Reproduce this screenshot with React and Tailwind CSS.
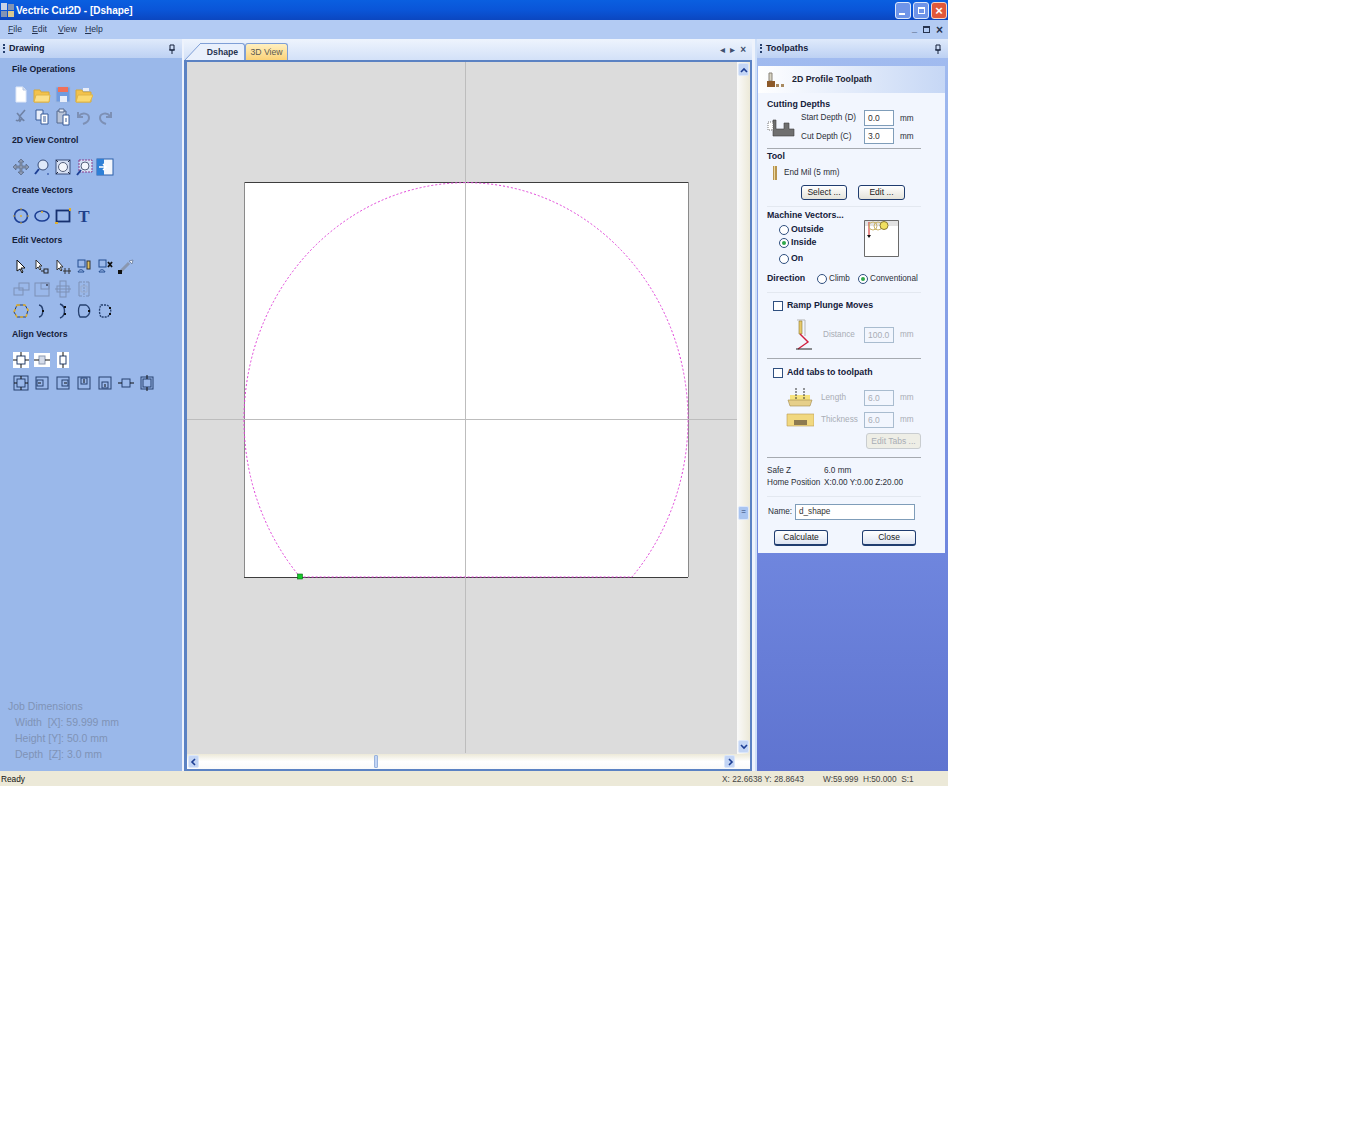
// App.jsx
const ICONS = {
  newFile: <><path d="M4 1h7l3 3v12H4z" fill="#fff" stroke="#dfe8f8" /><path d="M11 1v3h3" fill="#cfdcf4" stroke="#b8c8e4" /></>,
  open: <><path d="M1 4h6l1 2h8v10H1z" fill="#f3c24b" stroke="#d6a93a" /><path d="M1 16l2-7h14l-1 7z" fill="#fbe08a" stroke="#e0b648" /></>,
  save: <><rect x="2" y="1" width="14" height="15" fill="#6f9be0" stroke="#9ab4de" /><rect x="4" y="1" width="10" height="5" fill="#f0705a" /><rect x="6" y="10" width="7" height="6" fill="#e8eefa" /></>,
  openAlt: <><path d="M1 4h6l1 2h8v10H1z" fill="#f3c24b" stroke="#d6a93a" /><path d="M8 2h6v3H8z" fill="#e8eefa" /><path d="M1 16l2-7h15l-3 7z" fill="#fbd970" stroke="#e0b648" /></>,
  cut: <path d="M13 2L7 9M5 5l7 8M7 9a2 2 0 1 1-3 3M12 13a2 2 0 1 0-4 1" fill="none" stroke="#6f82a5" strokeWidth="1.6" />,
  copy: <><path d="M3 2h7v10H3z" fill="#e8eefa" stroke="#365a98" /><path d="M8 6h7v10H8z" fill="#fff" stroke="#365a98" /><path d="M10 9h3M10 11h3M10 13h3" stroke="#365a98" /></>,
  paste: <><path d="M3 3h9v12H3z" fill="#b9c4d8" stroke="#54688c" /><path d="M5 1h5v3H5z" fill="#e8eefa" stroke="#54688c" /><path d="M9 7h6v10H9z" fill="#fff" stroke="#365a98" /><path d="M11 11h2M11 13h2" stroke="#365a98" /></>,
  undo: <path d="M3 4v5h5M4 8c3-4 10-3 10 2 0 3-3 5-6 6" fill="none" stroke="#7d90b5" strokeWidth="2" />,
  redo: <path d="M15 4v5h-5M14 8c-3-4-10-3-10 2 0 3 3 5 6 6" fill="none" stroke="#7d90b5" strokeWidth="2" />,
  pan: <><path d="M9 1l3 3h-2v4h4V6l3 3-3 3v-2h-4v4h2l-3 3-3-3h2v-4H4v2L1 9l3-3v2h4V4H6z" fill="#8a97b0" stroke="#4c5a75" strokeWidth=".6" /></>,
  zoom: <><circle cx="10" cy="7" r="5" fill="#dfe9fa" stroke="#3b4f7a" /><path d="M6 11l-4 5" stroke="#1d3f94" strokeWidth="2" /><path d="M14 16h2" stroke="#1d3f94" /></>,
  zoomAll: <><rect x="2" y="2" width="14" height="14" fill="#d5e0f4" stroke="#3b4f7a" /><circle cx="9" cy="9" r="4.5" fill="#f3f6fc" stroke="#55617c" /><path d="M2 2l2 2M16 2l-2 2M2 16l2-2M16 16l-2-2" stroke="#1f2a44" /></>,
  zoomBox: <><rect x="4" y="2" width="13" height="12" fill="#d5e0f4" stroke="#8b3d8b" strokeDasharray="2 1" /><circle cx="10" cy="8" r="4" fill="#f3f6fc" stroke="#55617c" /><path d="M6 12l-4 5" stroke="#1d3f94" strokeWidth="2" /></>,
  exportView: <><rect x="1" y="1" width="16" height="16" fill="#f3f6fc" stroke="#2b5fa8" /><rect x="1" y="1" width="7" height="16" fill="#2e7fd6" /><path d="M3 9h6M7 6l3 3-3 3" fill="none" stroke="#fff" strokeWidth="1.5" /></>,
  circle: <><circle cx="9" cy="9" r="6.5" fill="none" stroke="#1d3f94" strokeWidth="1.6" /><circle cx="9" cy="9" r="1" fill="#e0b030" /><path d="M9 1v2M9 15v2M1 9h2M15 9h2" stroke="#c9a030" /></>,
  ellipse: <><ellipse cx="9" cy="9" rx="7" ry="5" fill="none" stroke="#1d3f94" strokeWidth="1.6" /><circle cx="9" cy="5" r="1" fill="#e0b030" /></>,
  rect: <><rect x="2.5" y="3.5" width="13" height="11" fill="none" stroke="#16306e" strokeWidth="1.8" /><path d="M1 15h3v2H1zM15 1h2v3h-2z" fill="#e0b030" /></>,
  select: <><path d="M5 2v11l3-2 2 4 1-1-2-4h4z" fill="#fff" stroke="#111" /></>,
  nodeEdit: <><path d="M3 2v9l2-2 2 3 1-1-2-3h3z" fill="#fff" stroke="#333" /><rect x="11" y="11" width="4" height="4" fill="none" stroke="#222" /><path d="M8 13h3" stroke="#222" /></>,
  scale: <><path d="M3 2v10l2-2 2 3 1-1-2-3h3z" fill="#fff" stroke="#333" /><path d="M11 10v6M15 10v6M9 13h8" stroke="#333" /></>,
  group: <><rect x="3" y="2" width="7" height="7" fill="none" stroke="#234c8f" /><path d="M3 14c1-3 5-3 6 0z" fill="none" stroke="#234c8f" /><rect x="12" y="3" width="3" height="8" fill="#e0c060" stroke="#333" /></>,
  ungroup: <><rect x="3" y="2" width="7" height="7" fill="none" stroke="#234c8f" /><path d="M3 14c1-3 5-3 6 0z" fill="none" stroke="#234c8f" /><path d="M12 4l4 5M16 4l-4 5" stroke="#111" strokeWidth="1.8" /></>,
  measure: <><path d="M3 14l9-9" stroke="#8a97b0" strokeWidth="3" /><rect x="1" y="12" width="4" height="4" fill="#111" /><path d="M12 3l4-1-1 4z" fill="#eef3fb" stroke="#788aa8" /></>,
  mirror: <><rect x="7" y="3" width="10" height="7" fill="none" stroke="#7d90b5" /><rect x="2" y="8" width="9" height="7" fill="none" stroke="#7d90b5" /></>,
  alignBox: <><rect x="2" y="3" width="14" height="13" fill="none" stroke="#7d90b5" /><rect x="8" y="3" width="8" height="6" fill="none" stroke="#7d90b5" /><rect x="13" y="4" width="2" height="2" fill="#55617c" /></>,
  cross: <><rect x="6" y="1" width="6" height="16" fill="none" stroke="#7d90b5" /><path d="M1 9h16" stroke="#7d90b5" /><rect x="3" y="6" width="12" height="6" fill="none" stroke="#7d90b5" /></>,
  split: <><path d="M7 2H4v14h3M11 2h3v14h-3" fill="none" stroke="#7d90b5" /><path d="M9 1v16" stroke="#7d90b5" strokeDasharray="2 1" /><path d="M6 6h6v6H6z" fill="none" stroke="#9aaccc" /></>,
  offset: <><path d="M5 3h8l3 5-2 7H5l-3-5z" fill="none" stroke="#26406f" /><path d="M5 3h8l3 5-2 7H5l-3-5z" fill="none" stroke="#e0b030" strokeWidth="1.6" strokeDasharray="3 3" /></>,
  arc: <><path d="M6 3c5 1 5 11 0 12" fill="none" stroke="#26406f" strokeWidth="1.4" /><rect x="9" y="8" width="2" height="2" fill="#111" /></>,
  arcAlt: <><path d="M6 2c6 2 6 12 0 14" fill="none" stroke="#26406f" strokeWidth="1.4" /><rect x="10" y="4" width="2" height="2" fill="#111" /><rect x="10" y="11" width="2" height="2" fill="#111" /></>,
  smooth: <><path d="M5 3h6c5 3 5 9 0 12H5c-2-3-2-9 0-12z" fill="none" stroke="#26406f" strokeWidth="1.3" /><rect x="13" y="8" width="2" height="2" fill="#111" /></>,
  smoothAlt: <><path d="M5 3h6c5 3 5 9 0 12H5c-2-3-2-9 0-12z" fill="none" stroke="#26406f" strokeDasharray="2 1" strokeWidth="1.3" /><rect x="13" y="5" width="2" height="2" fill="#111" /><rect x="13" y="11" width="2" height="2" fill="#111" /></>,
  centerBoth: <><rect x="1" y="1" width="16" height="16" fill="#fff" /><rect x="5" y="5" width="8" height="8" fill="none" stroke="#26406f" /><path d="M9 1v4M9 13v4M1 9h4M13 9h4" stroke="#111" /></>,
  centerX: <><rect x="1" y="2" width="16" height="14" fill="#fff" /><rect x="6" y="5" width="6" height="8" fill="#d5dcea" stroke="#8a97b0" /><path d="M1 9h5M12 9h5" stroke="#111" /></>,
  centerY: <><rect x="3" y="1" width="12" height="16" fill="#fff" /><rect x="6" y="5" width="6" height="8" fill="none" stroke="#26406f" /><path d="M9 1v4M9 13v4" stroke="#111" /></>,
  alignCenter: <><rect x="2" y="2" width="14" height="14" fill="none" stroke="#26406f" /><rect x="5" y="5" width="8" height="8" fill="none" stroke="#26406f" /><path d="M9 2v3M9 13v3M2 9h3M13 9h3" stroke="#111" /></>,
  alignLeft: <><rect x="3" y="3" width="12" height="12" fill="none" stroke="#26406f" /><rect x="4" y="6" width="6" height="6" fill="none" stroke="#26406f" /><path d="M5 9h3" stroke="#111" /></>,
  alignRight: <><rect x="3" y="3" width="12" height="12" fill="none" stroke="#26406f" /><rect x="8" y="6" width="6" height="6" fill="none" stroke="#26406f" /><path d="M10 9h3" stroke="#111" /></>,
  alignTop: <><rect x="3" y="3" width="12" height="12" fill="none" stroke="#26406f" /><rect x="6" y="4" width="6" height="6" fill="none" stroke="#26406f" /><path d="M9 5v4" stroke="#111" /></>,
  alignBottom: <><rect x="3" y="3" width="12" height="12" fill="none" stroke="#26406f" /><rect x="6" y="8" width="6" height="6" fill="none" stroke="#26406f" /><path d="M9 10v3" stroke="#111" /></>,
  alignMidX: <><rect x="5" y="5" width="8" height="8" fill="none" stroke="#26406f" /><path d="M1 9h4M13 9h4" stroke="#111" /></>,
  alignMidY: <><rect x="3" y="3" width="12" height="12" fill="none" stroke="#26406f" /><rect x="5" y="5" width="8" height="8" fill="none" stroke="#26406f" /><path d="M9 1v4M9 13v4" stroke="#111" /></>,
};

const Icon = ({ name }) => (
  <svg viewBox="0 0 18 18" className="w-[18px] h-[18px] shrink-0">
    {ICONS[name]}
  </svg>
);

const IconRow = ({ names }) => (
  <div className="flex gap-[3px] h-[22px] items-center">
    {names.map((n) => (
      <Icon key={n} name={n} />
    ))}
  </div>
);

const SectionTitle = ({ children, className = "" }) => (
  <div className={`pl-[12px] h-[14px] leading-[14px] font-bold text-[8.7px] text-[#14203a] ${className}`}>
    {children}
  </div>
);

const PanelHeader = ({ title }) => (
  <div className="h-[19px] shrink-0 flex items-center justify-between pl-[3px] pr-[6px] bg-gradient-to-b from-[#dfeafb] to-[#bdd1f3]">
    <div className="flex items-center gap-[4px]">
      <span className="w-[2px] h-[9px] border-l-2 border-dotted border-[#26406f]" />
      <span className="font-bold text-[9px] text-[#14203a]">{title}</span>
    </div>
    <svg viewBox="0 0 8 10" className="w-[8px] h-[10px]">
      <path d="M2 1h4v5H2zM1 6h6M4 6v4" fill="none" stroke="#14203a" />
    </svg>
  </div>
);

const LeftPanel = () => (
  <div className="w-[182px] shrink-0 bg-[#9ab8ea] flex flex-col">
    <PanelHeader title="Drawing" />
    <SectionTitle className="mt-[4px]">File Operations</SectionTitle>
    <div className="pl-[12px] mt-[8px]">
      <IconRow names={["newFile", "open", "save", "openAlt"]} />
      <IconRow names={["cut", "copy", "paste", "undo", "redo"]} />
    </div>
    <SectionTitle className="mt-[5px]">2D View Control</SectionTitle>
    <div className="pl-[12px] mt-[9px]">
      <IconRow names={["pan", "zoom", "zoomAll", "zoomBox", "exportView"]} />
    </div>
    <SectionTitle className="mt-[5px]">Create Vectors</SectionTitle>
    <div className="pl-[12px] mt-[8px] flex items-center h-[22px] gap-[3px]">
      <Icon name="circle" />
      <Icon name="ellipse" />
      <Icon name="rect" />
      <span className="w-[18px] text-center font-bold text-[17px] leading-none text-[#1f3f8a] font-['Liberation_Serif',serif]">T</span>
    </div>
    <SectionTitle className="mt-[6px]">Edit Vectors</SectionTitle>
    <div className="pl-[12px] mt-[9px]">
      <IconRow names={["select", "nodeEdit", "scale", "group", "ungroup", "measure"]} />
      <IconRow names={["mirror", "alignBox", "cross", "split"]} />
      <IconRow names={["offset", "arc", "arcAlt", "smooth", "smoothAlt"]} />
    </div>
    <SectionTitle className="mt-[5px]">Align Vectors</SectionTitle>
    <div className="pl-[12px] mt-[8px]">
      <IconRow names={["centerBoth", "centerX", "centerY"]} />
      <div className="mt-[1px]">
        <IconRow names={["alignCenter", "alignLeft", "alignRight", "alignTop", "alignBottom", "alignMidX", "alignMidY"]} />
      </div>
    </div>
    <div className="mt-auto mb-[9px] pl-[8px] text-[10.5px] leading-[16px] text-[#7f93b6]">
      <div>Job Dimensions</div>
      <div className="pl-[7px]">Width&nbsp; [X]: 59.999 mm</div>
      <div className="pl-[7px]">Height [Y]: 50.0 mm</div>
      <div className="pl-[7px]">Depth&nbsp; [Z]: 3.0 mm</div>
    </div>
  </div>
);

const ScrollButton = ({ d }) => (
  <div className="w-[11px] h-[13px] rounded-[2px] bg-[#c3d5f5] border border-[#dce7fa] flex items-center justify-center shrink-0">
    <svg viewBox="0 0 8 8" className="w-[8px] h-[8px]">
      <path d={d} fill="none" stroke="#1d3f94" strokeWidth="1.6" />
    </svg>
  </div>
);

const Drawing = () => (
  <svg width="550" height="691" viewBox="187 62 550 691" className="block">
    <rect x="244" y="182" width="444" height="395" fill="#fff" />
    <path d="M244 182.5h444M244 577.5h444" stroke="#3d3d3d" fill="none" />
    <path d="M244.5 182v395M688.5 182v395" stroke="#8a8a8a" fill="none" />
    <path d="M465.5 62v691M187 419.5h550" stroke="#bdbdbd" fill="none" />
    <path d="M300 577 A222 237 0 1 1 632 577 Z" fill="none" stroke="#e040d8" strokeDasharray="2 2" />
    <rect x="297.5" y="574" width="5" height="5" fill="#16c82a" stroke="#0a6a18" strokeWidth=".6" />
  </svg>
);

const CenterPanel = () => (
  <div className="w-[573px] shrink-0 flex flex-col pl-[2px] pr-[3px] bg-[#eef3fc]">
    <div className="h-[21px] shrink-0 flex items-end pl-[1px] pr-[3px] bg-gradient-to-b from-[#eef4fd] to-[#d3e1f8]">
      <svg viewBox="0 0 16 17" className="w-[16px] h-[17px] shrink-0">
        <path d="M0 17L14 2l2-2v17z" fill="#e9f0fc" />
        <path d="M0 17L14 2l2-2" fill="none" stroke="#7f9fd6" />
      </svg>
      <div className="h-[17px] w-[44px] rounded-tr-[3px] border-t border-r border-[#7f9fd6] bg-[#e9f0fc] text-[8.7px] leading-[16px] text-center font-bold text-[#26334f]">
        Dshape
      </div>
      <div className="h-[17px] w-[43px] rounded-t-[3px] border border-b-0 border-[#7f9fd6] bg-gradient-to-b from-[#fff0c0] to-[#fbd277] text-[8.7px] leading-[16px] text-center text-[#5a5a50]">
        3D View
      </div>
      <div className="ml-auto flex gap-[5px] items-center h-full text-[10px] text-[#40506e] pr-[3px]">
        <span>◂</span>
        <span>▸</span>
        <span className="font-bold">×</span>
      </div>
    </div>
    <div className="flex-1 flex flex-col border-2 border-l-[3px] border-[#5b82c3] bg-[#dcdcdc]">
      <div className="flex flex-1 min-h-0">
        <div className="w-[550px] bg-[#dcdcdc] overflow-hidden">
          <Drawing />
        </div>
        <div className="flex-1 flex flex-col items-center pt-[1px] pb-[1px] bg-gradient-to-r from-[#fafafa] to-[#ece9d8]">
          <ScrollButton d="M1 6l3-3 3 3" />
          <div className="h-[430px]" />
          <div className="w-[11px] h-[14px] rounded-[2px] bg-[#a9c4f0] border border-[#dce7fa] text-center leading-[10px] text-[8px] text-[#26406f]">=</div>
          <div className="flex-1" />
          <ScrollButton d="M1 2l3 3 3-3" />
        </div>
      </div>
      <div className="h-[15px] shrink-0 flex items-center pl-[1px] pr-[15px] bg-gradient-to-b from-[#ece9d8] via-[#ffffff] to-[#fafafa]">
        <ScrollButton d="M5 1L2 4l3 3" />
        <div className="w-[175px]" />
        <div className="w-[4px] h-[13px] rounded-[1px] bg-[#c3d5f5] border border-[#9ab4de]" />
        <div className="flex-1" />
        <ScrollButton d="M3 1l3 3-3 3" />
      </div>
    </div>
  </div>
);

const Rule = ({ light, className = "" }) => (
  <div className={`h-px ml-[9px] w-[154px] ${light ? "bg-[#e3e8f0]" : "bg-[#a6aab0]"} ${className}`} />
);

const Field = ({ value, disabled, className = "" }) => (
  <div
    className={`w-[30px] h-[16px] border leading-[14px] pl-[3px] text-[8.5px] ${
      disabled ? "text-[#a9adb5] border-[#a9bccf]" : "bg-white text-[#333] border-[#7f9db9]"
    } ${className}`}
  >
    {value}
  </div>
);

const Btn = ({ children, w, strong, disabled }) => (
  <div
    className={`${w} text-center rounded-[3px] border text-[8.5px] ${
      disabled
        ? "h-[16px] leading-[14px] border-[#c9cdd0] bg-[#eeeee6] text-[#a9adb5]"
        : strong
          ? "h-[16px] leading-[13px] border-[#1f3c6f] border-b-2 bg-gradient-to-b from-white to-[#dde4f2] text-[#222]"
          : "h-[15px] leading-[13px] border-[#1f3c6f] bg-gradient-to-b from-white to-[#e4e3da] text-[#222]"
    }`}
  >
    {children}
  </div>
);

const Radio = ({ on }) => (
  <span className="w-[10px] h-[10px] rounded-full border border-[#2f4f7f] bg-white flex items-center justify-center shrink-0">
    {on && <span className="w-[4px] h-[4px] rounded-full bg-[#2fa84a]" />}
  </span>
);

const Check = () => <span className="w-[10px] h-[10px] border border-[#2f4f7f] bg-white shrink-0" />;

const RightPanel = () => (
  <div className="w-[193px] shrink-0 flex flex-col bg-gradient-to-b from-[#a3bdf0] via-[#6f86de] via-[70%] to-[#5f74d0] border-l-2 border-[#cfe0f8]">
    <PanelHeader title="Toolpaths" />
    <div className="h-[8px]" />
    <div className="w-[187px] ml-[1px] h-[487px] flex flex-col bg-[#f2f6fe] text-[8.2px] text-[#2b2f38] whitespace-nowrap">
      <div className="h-[27px] shrink-0 flex items-center pl-[9px] bg-gradient-to-r from-white to-[#c6d7f5]">
        <svg viewBox="0 0 18 16" className="w-[18px] h-[16px]">
          <path d="M2 1h3v8H2z" fill="#d8d4c4" stroke="#8a8478" />
          <path d="M0 9h8v6H0z" fill="#8d5a2a" />
          <path d="M9 12h3v3H9zM14 12h3v3h-3z" fill="#a88a60" />
        </svg>
        <span className="ml-[7px] font-bold text-[8.8px] text-[#1c2435]">2D Profile Toolpath</span>
      </div>

      <div className="h-[12px] mt-[5px] pl-[9px] font-bold text-[8.8px] text-[#14203a] leading-[12px]">Cutting Depths</div>
      <div className="flex pl-[9px] h-[35px]">
        <svg viewBox="0 0 28 20" className="w-[28px] h-[20px] mt-[7px]">
          <path d="M6 3h3v9h8V6h5v6h5v7H6z" fill="#6f6f6f" stroke="#3d3d3d" strokeWidth=".6" />
          <path d="M1 5h5v8H1z" fill="#fff" stroke="#777" strokeDasharray="1 1" />
        </svg>
        <div className="ml-[6px] w-[63px]">
          <div className="h-[18px] leading-[16px]">Start Depth (D)</div>
          <div className="h-[17px] leading-[17px]">Cut Depth (C)</div>
        </div>
        <div>
          <Field value="0.0" className="mb-[2px]" />
          <Field value="3.0" />
        </div>
        <div className="ml-[6px]">
          <div className="h-[18px] leading-[18px]">mm</div>
          <div className="h-[17px] leading-[17px]">mm</div>
        </div>
      </div>
      <Rule className="mt-[3px]" />
      <div className="h-[13px] mt-[1px] pl-[9px] font-bold text-[8.8px] text-[#14203a] leading-[13px]">Tool</div>
      <div className="h-[18px] flex items-center pl-[14px] mt-[1px]">
        <svg viewBox="0 0 6 14" className="w-[6px] h-[14px]">
          <path d="M1 0h4v14H1z" fill="#b9954e" />
          <path d="M2 0h1v14H2z" fill="#ecd9a0" />
        </svg>
        <span className="ml-[6px]">End Mil (5 mm)</span>
      </div>
      <div className="flex h-[15px] mt-[3px] pl-[43px] gap-[11px]">
        <Btn w="w-[46px]">Select ...</Btn>
        <Btn w="w-[47px]">Edit ...</Btn>
      </div>
      <Rule light className="mt-[6px]" />

      <div className="relative h-[61px]">
        <div className="h-[16px] pl-[9px] font-bold text-[8.8px] text-[#14203a] leading-[16px]">Machine Vectors...</div>
        <div className="pl-[21px] font-bold text-[#14203a] text-[8.8px]">
          <div className="flex items-center gap-[2px] h-[13px]"><Radio /> Outside</div>
          <div className="flex items-center gap-[2px] h-[14px]"><Radio on /> Inside</div>
          <div className="flex items-center gap-[2px] h-[18px]"><Radio /> On</div>
        </div>
        <svg viewBox="0 0 35 37" className="absolute left-[106px] top-[13px] w-[35px] h-[37px]">
          <path d="M.5.5h34v36H.5z" fill="#fff" stroke="#6a6a6a" />
          <path d="M1 1h33v5H1z" fill="#e2e2e2" />
          <path d="M5 2v14" stroke="#d01f1f" />
          <path d="M3 15l2 3 2-3z" fill="#111" />
          <circle cx="9" cy="6" r="4" fill="none" stroke="#c9b36a" />
          <circle cx="14" cy="6" r="4" fill="none" stroke="#c9b36a" />
          <circle cx="20" cy="5.5" r="4" fill="#f0e060" stroke="#8c7a30" />
        </svg>
      </div>

      <div className="h-[16px] flex items-center pl-[9px] mt-[3px]">
        <span className="w-[50px] font-bold text-[8.8px] text-[#14203a]">Direction</span>
        <Radio />
        <span className="ml-[2px] w-[29px]">Climb</span>
        <Radio on />
        <span className="ml-[2px]">Conventional</span>
      </div>
      <Rule light className="mt-[5px]" />

      <div className="h-[25px] flex items-center pl-[15px] gap-[4px] font-bold text-[8.8px] text-[#14203a]">
        <Check /> Ramp Plunge Moves
      </div>
      <div className="h-[34px] flex items-center pl-[35px]">
        <svg viewBox="0 0 20 32" className="w-[20px] h-[32px]">
          <path d="M4 1h8v16" fill="none" stroke="#b5b5b5" />
          <path d="M6 2h3v13H6z" fill="#e8c96a" stroke="#8c7a30" strokeWidth=".6" />
          <path d="M7 15l8 8-10 7" fill="none" stroke="#d01f3f" strokeWidth="1.4" />
          <path d="M3 30h16" stroke="#222" />
        </svg>
        <span className="ml-[10px] w-[41px] text-[#a9adb5]">Distance</span>
        <Field value="100.0" disabled />
        <span className="ml-[6px] text-[#a9adb5]">mm</span>
      </div>
      <Rule className="mt-[6px]" />

      <div className="h-[27px] flex items-center pl-[15px] gap-[4px] font-bold text-[8.8px] text-[#14203a]">
        <Check /> Add tabs to toolpath
      </div>
      <div className="h-[24px] flex items-center pl-[28px]">
        <svg viewBox="0 0 28 22" className="w-[28px] h-[22px]">
          <path d="M4 8h20v5H4z" fill="#f6e27e" />
          <path d="M10 1v12M18 1v12" stroke="#333" strokeDasharray="2 1" />
          <path d="M2 13h24l-2 6H4z" fill="#e6cf8a" stroke="#a38a4a" strokeWidth=".6" />
        </svg>
        <span className="ml-[7px] w-[43px] text-[#a9adb5]">Length</span>
        <Field value="6.0" disabled />
        <span className="ml-[6px] text-[#a9adb5]">mm</span>
      </div>
      <div className="h-[20px] flex items-center pl-[28px]">
        <svg viewBox="0 0 28 14" className="w-[28px] h-[14px]">
          <path d="M1 1h27v12H1z" fill="#f1d880" stroke="#b99a50" strokeWidth=".6" />
          <path d="M8 7h13v5H8z" fill="#8d7a50" />
        </svg>
        <span className="ml-[7px] w-[43px] text-[#a9adb5]">Thickness</span>
        <Field value="6.0" disabled />
        <span className="ml-[6px] text-[#a9adb5]">mm</span>
      </div>
      <div className="pl-[108px] mt-[3px]">
        <Btn w="w-[55px]" disabled>Edit Tabs ...</Btn>
      </div>
      <Rule className="mt-[8px]" />

      <div className="pl-[9px] mt-[7px] leading-[12px]">
        <div className="flex h-[12px]"><span className="w-[57px]">Safe Z</span><span>6.0 mm</span></div>
        <div className="flex h-[12px]"><span className="w-[57px]">Home Position</span><span>X:0.00 Y:0.00 Z:20.00</span></div>
      </div>
      <Rule light className="mt-[7px]" />

      <div className="flex items-center pl-[10px] mt-[7px] h-[16px]">
        <span className="w-[27px]">Name:</span>
        <div className="w-[120px] h-[16px] border border-[#7f9db9] bg-white pl-[3px] leading-[13px] text-[#333]">d_shape</div>
      </div>
      <div className="flex justify-between pl-[16px] pr-[29px] mt-[10px]">
        <Btn w="w-[54px]" strong>Calculate</Btn>
        <Btn w="w-[54px]" strong>Close</Btn>
      </div>
    </div>
  </div>
);

const TitleBar = () => (
  <div className="h-[20px] shrink-0 flex items-center justify-between bg-gradient-to-b from-[#0a5fe0] via-[#0a55d8] to-[#0b46c0]">
    <div className="flex items-center">
      <svg viewBox="0 0 13 14" className="w-[13px] h-[14px] ml-[1px]">
        <path d="M0 0h6v7H0z" fill="#c6d2e6" />
        <path d="M7 1h6v6H7z" fill="#8294b4" />
        <path d="M0 8h6v6H0z" fill="#8294b4" />
        <path d="M7 8h6v6H7z" fill="#d8c890" />
      </svg>
      <span className="ml-[2px] text-white text-[10px] font-bold">Vectric Cut2D - [Dshape]</span>
    </div>
    <div className="flex items-center gap-[2px] pr-[1px]">
      <div className="w-[16px] h-[17px] rounded-[3px] border border-[#dce7fa] bg-[#6f94e8] flex items-end pl-[3px] pb-[3px]">
        <span className="w-[6px] h-[2px] bg-white" />
      </div>
      <div className="w-[16px] h-[17px] rounded-[3px] border border-[#dce7fa] bg-[#6f94e8] flex items-center justify-center">
        <span className="w-[7px] h-[7px] border border-white border-t-2" />
      </div>
      <div className="w-[16px] h-[17px] rounded-[3px] border border-[#f5d5c8] bg-[#e2583a] flex items-center justify-center text-white text-[13px] font-bold leading-none">
        ×
      </div>
    </div>
  </div>
);

const MenuBar = () => (
  <div className="h-[19px] shrink-0 flex items-center pl-[8px] pr-[5px] bg-[#b3cbf3] text-[8.7px] text-[#26334f]">
    <span className="w-[24px]"><u>F</u>ile</span>
    <span className="w-[26px]"><u>E</u>dit</span>
    <span className="w-[27px]"><u>V</u>iew</span>
    <span><u>H</u>elp</span>
    <div className="ml-auto flex gap-[6px] items-center font-bold text-[#26334f]">
      <span className="text-[9px]">_</span>
      <span className="w-[7px] h-[7px] border border-[#26334f] border-t-2" />
      <span className="text-[12px] leading-none">×</span>
    </div>
  </div>
);

const StatusBar = () => (
  <div className="h-[15px] shrink-0 flex items-center bg-[#ece9d8] text-[8.3px] text-[#444] pl-[1px] pt-[1px]">
    <span className="text-[#111]">Ready</span>
    <span className="ml-[697px]">X: 22.6638 Y: 28.8643</span>
    <span className="ml-[19px]">W:59.999&nbsp; H:50.000&nbsp; S:1</span>
  </div>
);

export default function App() {
  return (
    <div className="w-[1354px] h-[1122px] bg-white font-['Liberation_Sans',Arial,sans-serif]">
      <div className="w-[948px] h-[786px] flex flex-col">
        <TitleBar />
        <MenuBar />
        <div className="flex-1 flex min-h-0">
          <LeftPanel />
          <CenterPanel />
          <RightPanel />
        </div>
        <StatusBar />
      </div>
    </div>
  );
}
